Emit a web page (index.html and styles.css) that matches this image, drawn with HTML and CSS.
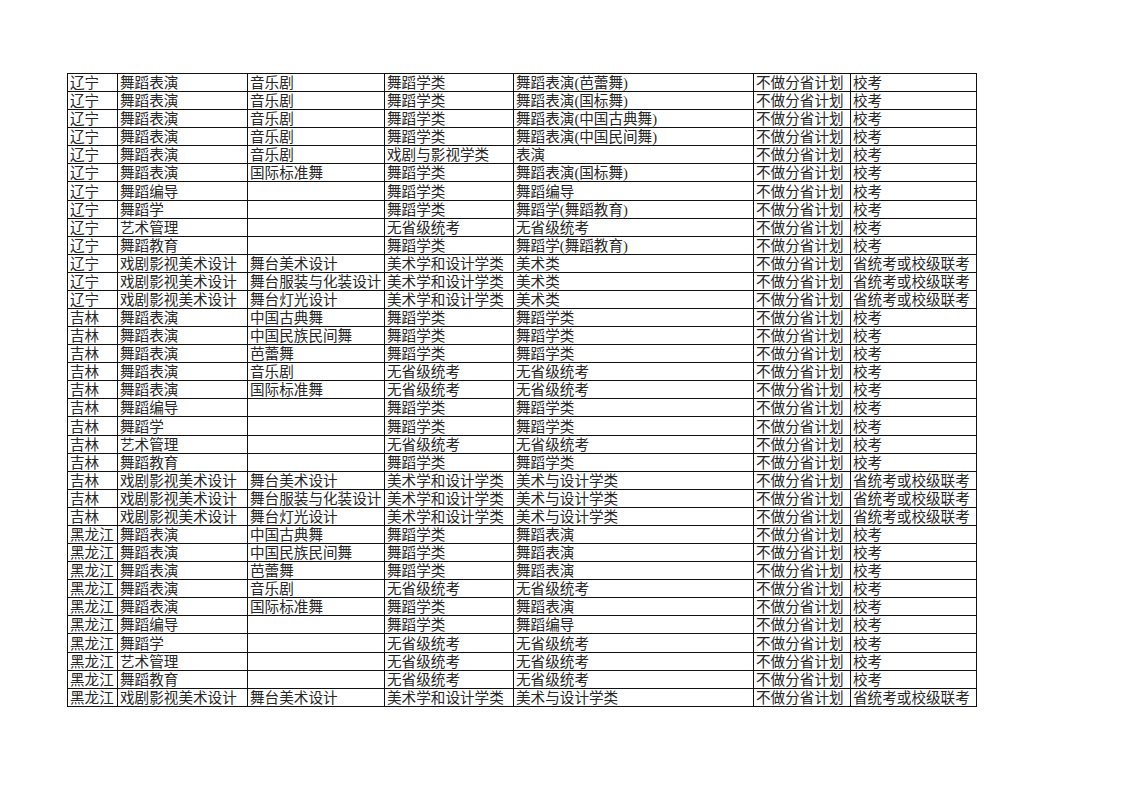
FILE: index.html
```html
<!DOCTYPE html>
<html lang="zh">
<head>
<meta charset="utf-8">
<title>艺术类专业招生计划</title>
<link rel="stylesheet" href="styles.css">
</head>
<body>
<div class="page">
<table class="sheet">
<colgroup>
<col class="c1"><col class="c2"><col class="c3"><col class="c4"><col class="c5"><col class="c6"><col class="c7">
</colgroup>
<tbody>
<tr><td>辽宁</td><td>舞蹈表演</td><td>音乐剧</td><td>舞蹈学类</td><td>舞蹈表演(芭蕾舞)</td><td>不做分省计划</td><td>校考</td></tr>
<tr><td>辽宁</td><td>舞蹈表演</td><td>音乐剧</td><td>舞蹈学类</td><td>舞蹈表演(国标舞)</td><td>不做分省计划</td><td>校考</td></tr>
<tr><td>辽宁</td><td>舞蹈表演</td><td>音乐剧</td><td>舞蹈学类</td><td>舞蹈表演(中国古典舞)</td><td>不做分省计划</td><td>校考</td></tr>
<tr><td>辽宁</td><td>舞蹈表演</td><td>音乐剧</td><td>舞蹈学类</td><td>舞蹈表演(中国民间舞)</td><td>不做分省计划</td><td>校考</td></tr>
<tr><td>辽宁</td><td>舞蹈表演</td><td>音乐剧</td><td>戏剧与影视学类</td><td>表演</td><td>不做分省计划</td><td>校考</td></tr>
<tr><td>辽宁</td><td>舞蹈表演</td><td>国际标准舞</td><td>舞蹈学类</td><td>舞蹈表演(国标舞)</td><td>不做分省计划</td><td>校考</td></tr>
<tr><td>辽宁</td><td>舞蹈编导</td><td></td><td>舞蹈学类</td><td>舞蹈编导</td><td>不做分省计划</td><td>校考</td></tr>
<tr><td>辽宁</td><td>舞蹈学</td><td></td><td>舞蹈学类</td><td>舞蹈学(舞蹈教育)</td><td>不做分省计划</td><td>校考</td></tr>
<tr><td>辽宁</td><td>艺术管理</td><td></td><td>无省级统考</td><td>无省级统考</td><td>不做分省计划</td><td>校考</td></tr>
<tr><td>辽宁</td><td>舞蹈教育</td><td></td><td>舞蹈学类</td><td>舞蹈学(舞蹈教育)</td><td>不做分省计划</td><td>校考</td></tr>
<tr><td>辽宁</td><td>戏剧影视美术设计</td><td>舞台美术设计</td><td>美术学和设计学类</td><td>美术类</td><td>不做分省计划</td><td>省统考或校级联考</td></tr>
<tr><td>辽宁</td><td>戏剧影视美术设计</td><td>舞台服装与化装设计</td><td>美术学和设计学类</td><td>美术类</td><td>不做分省计划</td><td>省统考或校级联考</td></tr>
<tr><td>辽宁</td><td>戏剧影视美术设计</td><td>舞台灯光设计</td><td>美术学和设计学类</td><td>美术类</td><td>不做分省计划</td><td>省统考或校级联考</td></tr>
<tr><td>吉林</td><td>舞蹈表演</td><td>中国古典舞</td><td>舞蹈学类</td><td>舞蹈学类</td><td>不做分省计划</td><td>校考</td></tr>
<tr><td>吉林</td><td>舞蹈表演</td><td>中国民族民间舞</td><td>舞蹈学类</td><td>舞蹈学类</td><td>不做分省计划</td><td>校考</td></tr>
<tr><td>吉林</td><td>舞蹈表演</td><td>芭蕾舞</td><td>舞蹈学类</td><td>舞蹈学类</td><td>不做分省计划</td><td>校考</td></tr>
<tr><td>吉林</td><td>舞蹈表演</td><td>音乐剧</td><td>无省级统考</td><td>无省级统考</td><td>不做分省计划</td><td>校考</td></tr>
<tr><td>吉林</td><td>舞蹈表演</td><td>国际标准舞</td><td>无省级统考</td><td>无省级统考</td><td>不做分省计划</td><td>校考</td></tr>
<tr><td>吉林</td><td>舞蹈编导</td><td></td><td>舞蹈学类</td><td>舞蹈学类</td><td>不做分省计划</td><td>校考</td></tr>
<tr><td>吉林</td><td>舞蹈学</td><td></td><td>舞蹈学类</td><td>舞蹈学类</td><td>不做分省计划</td><td>校考</td></tr>
<tr><td>吉林</td><td>艺术管理</td><td></td><td>无省级统考</td><td>无省级统考</td><td>不做分省计划</td><td>校考</td></tr>
<tr><td>吉林</td><td>舞蹈教育</td><td></td><td>舞蹈学类</td><td>舞蹈学类</td><td>不做分省计划</td><td>校考</td></tr>
<tr><td>吉林</td><td>戏剧影视美术设计</td><td>舞台美术设计</td><td>美术学和设计学类</td><td>美术与设计学类</td><td>不做分省计划</td><td>省统考或校级联考</td></tr>
<tr><td>吉林</td><td>戏剧影视美术设计</td><td>舞台服装与化装设计</td><td>美术学和设计学类</td><td>美术与设计学类</td><td>不做分省计划</td><td>省统考或校级联考</td></tr>
<tr><td>吉林</td><td>戏剧影视美术设计</td><td>舞台灯光设计</td><td>美术学和设计学类</td><td>美术与设计学类</td><td>不做分省计划</td><td>省统考或校级联考</td></tr>
<tr><td>黑龙江</td><td>舞蹈表演</td><td>中国古典舞</td><td>舞蹈学类</td><td>舞蹈表演</td><td>不做分省计划</td><td>校考</td></tr>
<tr><td>黑龙江</td><td>舞蹈表演</td><td>中国民族民间舞</td><td>舞蹈学类</td><td>舞蹈表演</td><td>不做分省计划</td><td>校考</td></tr>
<tr><td>黑龙江</td><td>舞蹈表演</td><td>芭蕾舞</td><td>舞蹈学类</td><td>舞蹈表演</td><td>不做分省计划</td><td>校考</td></tr>
<tr><td>黑龙江</td><td>舞蹈表演</td><td>音乐剧</td><td>无省级统考</td><td>无省级统考</td><td>不做分省计划</td><td>校考</td></tr>
<tr><td>黑龙江</td><td>舞蹈表演</td><td>国际标准舞</td><td>舞蹈学类</td><td>舞蹈表演</td><td>不做分省计划</td><td>校考</td></tr>
<tr><td>黑龙江</td><td>舞蹈编导</td><td></td><td>舞蹈学类</td><td>舞蹈编导</td><td>不做分省计划</td><td>校考</td></tr>
<tr><td>黑龙江</td><td>舞蹈学</td><td></td><td>无省级统考</td><td>无省级统考</td><td>不做分省计划</td><td>校考</td></tr>
<tr><td>黑龙江</td><td>艺术管理</td><td></td><td>无省级统考</td><td>无省级统考</td><td>不做分省计划</td><td>校考</td></tr>
<tr><td>黑龙江</td><td>舞蹈教育</td><td></td><td>无省级统考</td><td>无省级统考</td><td>不做分省计划</td><td>校考</td></tr>
<tr><td>黑龙江</td><td>戏剧影视美术设计</td><td>舞台美术设计</td><td>美术学和设计学类</td><td>美术与设计学类</td><td>不做分省计划</td><td>省统考或校级联考</td></tr>
</tbody>
</table>
</div>
</body>
</html>
```

FILE: styles.css
```css
html, body {
  margin: 0;
  padding: 0;
  background: #ffffff;
}

.page {
  padding: 73px 0 0 67px;
}

.sheet {
  border-collapse: separate;
  border-spacing: 0;
  table-layout: fixed;
  width: 910px;
  border-top: 1px solid #111111;
  border-left: 1px solid #111111;
  font-family: "Liberation Serif", "Noto Sans CJK SC", serif;
  font-size: 14.6px;
  color: #262626;
}

.sheet .c1 { width: 50px; }
.sheet .c2 { width: 130px; }
.sheet .c3 { width: 137px; }
.sheet .c4 { width: 129px; }
.sheet .c5 { width: 240px; }
.sheet .c6 { width: 97px; }
.sheet .c7 { width: 126px; }

.sheet td {
  box-sizing: border-box;
  height: 18.09px;
  border-right: 1px solid #111111;
  border-bottom: 1px solid #111111;
  padding: 0 0 0 2px;
  line-height: 16px;
  white-space: nowrap;
  vertical-align: bottom;
}
```
